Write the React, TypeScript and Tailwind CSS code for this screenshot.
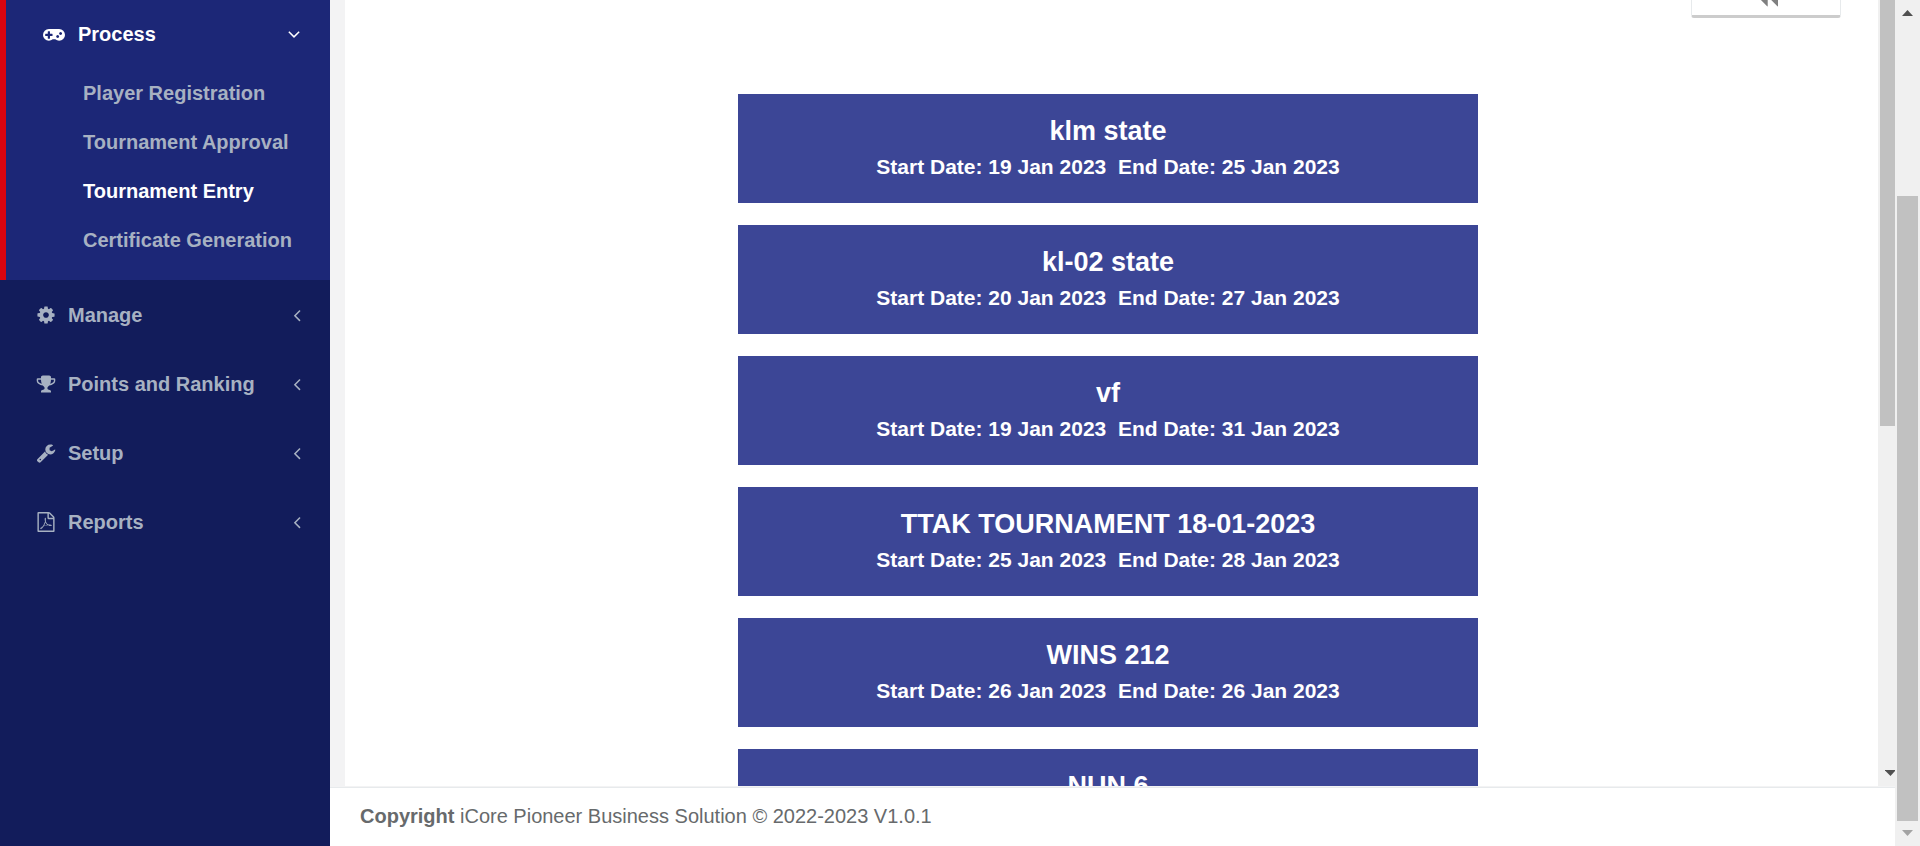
import React from "react";

const ICONS = {
  cog: "M1152 896q0-106-75-181t-181-75-181 75-75 181 75 181 181 75 181-75 75-181zm512-109v222q0 12-8 23t-20 13l-185 28q-19 54-39 91 35 50 107 138 10 12 10 25t-9 23q-27 37-99 108t-94 71q-12 0-26-9l-138-108q-44 23-91 38-16 136-29 186-7 28-36 28h-222q-14 0-24.5-8.5t-11.5-21.5l-28-184q-49-16-90-37l-141 107q-10 9-25 9-14 0-25-11-126-114-165-168-7-10-7-23 0-12 8-23 15-21 51-66.5t54-70.5q-27-50-41-99l-183-27q-13-2-21-12.5t-8-23.5v-222q0-12 8-23t19-13l186-28q14-46 39-92-40-57-107-138-10-12-10-24 0-10 9-23 26-36 98.5-107.5t94.5-71.5q13 0 26 10l138 107q44-23 91-38 16-136 29-186 7-28 36-28h222q14 0 24.5 8.5t11.5 21.5l28 184q49 16 90 37l142-107q9-9 24-9 13 0 25 10 129 119 165 170 7 8 7 22 0 12-8 23-15 21-51 66.5t-54 70.5q26 50 41 98l183 28q13 2 21 12.5t8 23.5z",
  trophy:
    "M522 883q-74-162-74-371h-256v96q0 78 94.5 162t235.5 113zm1078-275v-96h-256q0 209-74 371 141-29 235.5-113t94.5-162zm128-128v128q0 71-41.5 143t-112 130-173 97.5-215.5 44.5q-42 54-95 95-38 34-52.5 72.5t-14.5 89.5q0 54 30.5 91t97.5 37q75 0 133.5 45.5t58.5 114.5v64q0 14-9 23t-23 9h-832q-14 0-23-9t-9-23v-64q0-69 58.5-114.5t133.5-45.5q67 0 97.5-37t30.5-91q0-51-14.5-89.5t-52.5-72.5q-53-41-95-95-113-5-215.5-44.5t-173-97.5-112-130-41.5-143v-128q0-40 28-68t68-28h288v-96q0-66 47-113t113-47h576q66 0 113 47t47 113v96h288q40 0 68 28t28 68z",
  wrench:
    "M448 1472q0-26-19-45t-45-19-45 19-19 45 19 45 45 19 45-19 19-45zm644-420l-682 682q-37 37-90 37-52 0-91-37l-106-108q-38-36-38-90 0-53 38-91l681-681q39 98 114.5 173.5t173.5 114.5zm634-435q0 39-23 106-47 134-164.5 217.5t-258.5 83.5q-185 0-316.5-131.5t-131.5-316.5 131.5-316.5 316.5-131.5q58 0 121.5 16.5t107.5 46.5q16 11 16 28t-16 28l-293 169v224l193 107q5-3 79-48.5t135.5-81 70.5-35.5q15 0 23.5 10t8.5 25z",
  pdf: "M1596 380q28 28 48 76t20 88v1152q0 40-28 68t-68 28h-1344q-40 0-68-28t-28-68v-1600q0-40 28-68t68-28h896q40 0 88 20t76 48zm-444-244v376h376q-10-29-22-41l-313-313q-12-12-41-22zm384 1528v-1024h-416q-40 0-68-28t-28-68v-416h-768v1536h1280zm-514-593q33 26 84 56 59-7 117-7 147 0 177 49 16 22 2 52 0 1-1 2l-2 2v1q-6 38-71 38-48 0-115-20t-130-53q-221 24-392 83-153 262-242 262-15 0-28-7l-24-12q-1-1-6-5-10-10-6-36 9-40 56-91.5t132-96.5q14-9 23 6 2 2 2 4 52-85 107-197 68-136 104-262-24-82-30.5-159.5t6.5-127.5q11-40 42-40h22q23 0 35 15 18 21 9 68-2 6-4 8 1 3 1 8v30q-2 123-14 192 55 164 146 238zm-576 411q52-24 137-158-51 40-87.5 84t-49.5 74zm398-920q-15 42-2 132 1-7 7-44 0-3 7-43 1-4 4-8-1-1-1-2-1-2-1-3-1-22-13-36 0 1-1 2v2zm-124 661q135-54 284-81-2-1-13-9.5t-16-13.5q-76-67-127-176-27 86-83 197-30 56-45 83zm646-16q-24-24-140-24 76 28 124 28 14 0 18-1 0-1-2-3z",
  gamepad:
    "M832 1088v-128q0-14-9-23t-23-9h-192v-192q0-14-9-23t-23-9h-128q-14 0-23 9t-9 23v192h-192q-14 0-23 9t-9 23v128q0 14 9 23t23 9h192v192q0 14 9 23t23 9h128q14 0 23-9t9-23v-192h192q14 0 23-9t9-23zm576 64q0-53-37.5-90.5t-90.5-37.5-90.5 37.5-37.5 90.5 37.5 90.5 90.5 37.5 90.5-37.5 37.5-90.5zm256-256q0-53-37.5-90.5t-90.5-37.5-90.5 37.5-37.5 90.5 37.5 90.5 90.5 37.5 90.5-37.5 37.5-90.5zm256 128q0 212-150 362t-362 150q-192 0-338-128h-220q-146 128-338 128-212 0-362-150t-150-362 150-362 362-150h896q212 0 362 150t150 362z",
  left: "M1203 544q0 13-10 23l-393 393 393 393q10 10 10 23t-10 23l-50 50q-10 10-23 10t-23-10l-466-466q-10-10-10-23t10-23l466-466q10-10 23-10t23 10l50 50q10 10 10 23z",
  down: "M1395 736q0 13-10 23l-466 466q-10 10-23 10t-23-10l-466-466q-10-10-10-23t10-23l50-50q10-10 23-10t23 10l393 393 393-393q10-10 23-10t23 10l50 50q10 10 10 23z",
  backward:
    "M1747 147q19-19 32-13t13 32v1472q0 26-13 32t-32-13l-710-710q-9-9-13-19v710q0 26-13 32t-32-13l-710-710q-19-19-19-45t19-45l710-710q19-19 32-13t13 32v710q4-10 13-19z",
};

type IconName = keyof typeof ICONS;

function Icon({ name, className, viewBox = "0 0 1792 1792" }: { name: IconName; className: string; viewBox?: string }) {
  return (
    <svg viewBox={viewBox} className={className} fill="currentColor" aria-hidden="true">
      <path d={ICONS[name]} />
    </svg>
  );
}

const processItems = [
  { label: "Player Registration", active: false },
  { label: "Tournament Approval", active: false },
  { label: "Tournament Entry", active: true },
  { label: "Certificate Generation", active: false },
];

const sections: { label: string; icon: IconName }[] = [
  { label: "Manage", icon: "cog" },
  { label: "Points and Ranking", icon: "trophy" },
  { label: "Setup", icon: "wrench" },
  { label: "Reports", icon: "pdf" },
];

const tournaments = [
  { name: "klm state", start: "19 Jan 2023", end: "25 Jan 2023" },
  { name: "kl-02 state", start: "20 Jan 2023", end: "27 Jan 2023" },
  { name: "vf", start: "19 Jan 2023", end: "31 Jan 2023" },
  { name: "TTAK TOURNAMENT 18-01-2023", start: "25 Jan 2023", end: "28 Jan 2023" },
  { name: "WINS 212", start: "26 Jan 2023", end: "26 Jan 2023" },
  { name: "NUN 6", start: "", end: "" },
];

function Sidebar() {
  return (
    <nav className="w-[330px] shrink-0 bg-[#121c5b] text-[20px] font-bold text-[#a7b1c2]">
      <div className="border-l-6 border-[#d9040f] bg-[#1c2777] pb-[15px]">
        <button type="button" className="flex h-[69px] w-full items-center pr-[26px] pb-0.5 pl-[37px] text-white">
          <Icon name="gamepad" viewBox="0 0 1920 1792" className="mr-[13px] h-[21px] w-[22px]" />
          <span>Process</span>
          <Icon name="down" className="ml-auto size-5" />
        </button>
        <ul>
          {processItems.map((item) => (
            <li key={item.label}>
              <a
                href="#"
                className={
                  item.active
                    ? "flex h-[49px] items-center pb-0.5 pl-[77px] text-white"
                    : "flex h-[49px] items-center pb-0.5 pl-[77px]"
                }
              >
                {item.label}
              </a>
            </li>
          ))}
        </ul>
      </div>
      <div className="pt-px">
        {sections.map((s) => (
          <button key={s.label} type="button" className="flex h-[69px] w-full items-center pr-[23px] pb-px pl-9">
            <Icon name={s.icon} className="mr-3 size-5" />
            <span>{s.label}</span>
            <Icon name="left" className="ml-auto size-5" />
          </button>
        ))}
      </div>
    </nav>
  );
}

function TournamentList() {
  return (
    <div className="min-w-0 flex-1 overflow-hidden bg-white">
      <div className="-mt-6 flex justify-end pr-[37px]">
        <button
          type="button"
          aria-label="Back"
          className="flex h-[42px] w-[150px] items-center justify-center rounded-[3px] border border-b-3 border-[#e7eaec] border-b-[#cccccc] text-[#808080]"
        >
          <Icon name="backward" className="size-6" />
        </button>
      </div>
      <ul className="mt-[76px] flex flex-col gap-[22px] pr-[30px] pl-[23px]">
        {tournaments.map((t) => (
          <li key={t.name} className="mx-auto w-1/2">
            <a href="#" className="block h-[109px] bg-[#3c4696] pt-5 text-center font-bold text-white">
              <h2 className="text-[27px] leading-[34px]">{t.name}</h2>
              {t.start && (
                <p className="text-[21px] leading-[38px]">{`Start Date: ${t.start}\u00a0 End Date: ${t.end}`}</p>
              )}
            </a>
          </li>
        ))}
      </ul>
    </div>
  );
}

export default function App() {
  return (
    <div className="flex h-screen overflow-hidden bg-[#f3f3f4] font-['Liberation_Sans',Arial,sans-serif]">
      <Sidebar />
      <div className="flex min-w-0 flex-1 flex-col">
        <main className="flex min-h-0 flex-1 pb-px pl-[15px]">
          <TournamentList />
          <div aria-hidden="true" className="flex w-[17px] shrink-0 flex-col items-end justify-between bg-[#f0f0f0] pb-[10px]">
            <div className="h-[426px] w-[15px] bg-[#c1c1c1]" />
            <svg viewBox="0 0 10 6" className="h-[6px] w-[10px]" fill="#505050">
              <path d="M0 0H10V1L5.500 6L0 0.500Z" />
            </svg>
          </div>
        </main>
        <footer className="border-t border-[#e7eaec] bg-white px-[30px] pt-[14px] pb-[15px] text-[20px] leading-[29px] text-[#676a6c]">
          <strong>Copyright</strong> iCore Pioneer Business Solution © 2022-2023 V1.0.1
        </footer>
      </div>
      <div aria-hidden="true" className="flex w-[25px] shrink-0 flex-col items-center bg-[#f0f0f0] pt-[10px] pb-[10px]">
        <svg viewBox="0 0 11 6" className="h-[6px] w-[11px]" fill="#505050">
          <path d="M0 6L5.500 0L11 6Z" />
        </svg>
        <div className="mt-[180px] mb-[9px] w-[21px] flex-1 bg-[#c1c1c1]" />
        <svg viewBox="0 0 11 6" className="h-[6px] w-[11px]" fill="#a3a3a3">
          <path d="M0 0L5.500 6L11 0Z" />
        </svg>
      </div>
    </div>
  );
}
